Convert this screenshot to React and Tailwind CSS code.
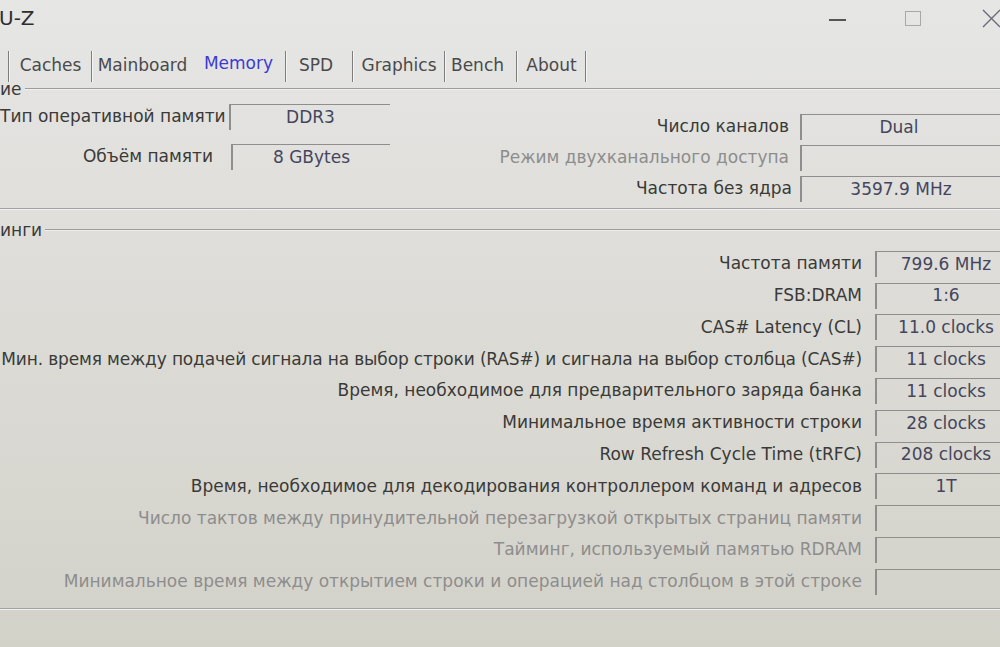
import React from 'react';

const tabs = [
  { label: 'Caches', w: 'w-[81px]', sepAfter: true },
  { label: 'Mainboard', w: 'w-[99px]', sepAfter: false },
  { label: 'Memory', w: 'w-[93px]', sepAfter: true, active: true },
  { label: 'SPD', w: 'w-[65px] pr-[7px]', sepAfter: true },
  { label: 'Graphics', w: 'w-[90px]', sepAfter: true },
  { label: 'Bench', w: 'w-[70px] pr-[7px]', sepAfter: true },
  { label: 'About', w: 'w-[67px]', sepAfter: true },
];

const timings = [
  { label: 'Частота памяти', value: '799.6 MHz' },
  { label: 'FSB:DRAM', value: '1:6' },
  { label: 'CAS# Latency (CL)', value: '11.0 clocks' },
  { label: 'Мин. время между подачей сигнала на выбор строки (RAS#) и сигнала на выбор столбца (CAS#)', value: '11 clocks', tight: true },
  { label: 'Время, необходимое для предварительного заряда банка', value: '11 clocks' },
  { label: 'Минимальное время активности строки', value: '28 clocks' },
  { label: 'Row Refresh Cycle Time (tRFC)', value: '208 clocks' },
  { label: 'Время, необходимое для декодирования контроллером команд и адресов', value: '1T' },
  { label: 'Число тактов между принудительной перезагрузкой открытых страниц памяти', value: '', disabled: true },
  { label: 'Тайминг, используемый памятью RDRAM', value: '', disabled: true },
  { label: 'Минимальное время между открытием строки и операцией над столбцом в этой строке', value: '', disabled: true },
];

const Sep = () => <div className="w-[2px] h-[31px] bg-[#7d7d7d] border-r border-[#f4f4f4] shrink-0" />;

const Field = ({ value, className }) => (
  <div className={`h-[26px] border-t border-l-2 border-[#8e8e8e] flex items-center justify-center text-[#45465e] shrink-0 ${className}`}>
    {value}
  </div>
);

const GroupHeader = ({ title }) => (
  <div className="flex items-center h-[18px]">
    <span className="text-[#3a3a3a] leading-none pr-[3px]">{title}</span>
    <div className="flex-1 border-t border-[#9c9c9c] border-b border-b-[#f0f0ee]" />
  </div>
);

export default function App() {
  return (
    <div
      className="w-[1000px] h-[647px] overflow-hidden bg-gradient-to-b from-[#e6e6e5] via-[#dcdbd6] to-[#d3d2c9] text-[17px] text-[#3a3a38]"
      style={{ fontFamily: '"DejaVu Sans", Verdana, sans-serif' }}
    >
      {/* Title bar */}
      <div className="h-[40px] flex items-center justify-between">
        <span className="text-[20px] text-[#2e2e2e] -ml-[1px] -mt-[4px]">U-Z</span>
        <div className="flex items-center h-full">
          <div className="w-[17px] h-[2px] bg-[#555] mr-[59px]" />
          <div className="w-[16px] h-[15px] border border-[#a8a8a8] mr-[61px] -mt-[3px]" />
          <svg width="19" height="19" viewBox="0 0 19 19" className="-mr-[1px] -mt-[3px]">
            <path d="M1 1 L18 18 M18 1 L1 18" stroke="#6a6a7a" strokeWidth="1.4" />
          </svg>
        </div>
      </div>

      {/* Tabs */}
      <div className="h-[48px] flex items-center pt-[4px]">
        <div className="w-[8px] shrink-0" />
        <Sep />
        {tabs.map((t) => (
          <React.Fragment key={t.label}>
            <div className={`${t.w} shrink-0 text-center ${t.active ? 'text-[#3b3bd4] -mt-[4px]' : 'text-[#4a4a4a]'}`}>
              {t.label}
            </div>
            {t.sepAfter && <Sep />}
          </React.Fragment>
        ))}
      </div>

      {/* General group */}
      <div className="-mt-[8px]">
        <GroupHeader title="ие" />
        <div className="flex h-[110px]">
          <div className="w-[390px] pt-[6px] flex flex-col gap-[14px] shrink-0">
            <div className="flex items-center">
              <div className="w-[216px] text-right whitespace-nowrap">Тип оперативной памяти</div>
              <Field value="DDR3" className="ml-[13px] w-[161px]" />
            </div>
            <div className="flex items-center">
              <div className="w-[216px] text-right whitespace-nowrap pr-[3px]">Объём памяти</div>
              <Field value="8 GBytes" className="ml-[15px] w-[159px]" />
            </div>
          </div>
          <div className="flex-1 pt-[16px] flex flex-col gap-[5px]">
            <div className="flex items-center">
              <div className="flex-1 text-right pr-[11px] whitespace-nowrap">Число каналов</div>
              <Field value="Dual" className="w-[200px] pr-[4px]" />
            </div>
            <div className="flex items-center">
              <div className="flex-1 text-right pr-[11px] whitespace-nowrap text-[#8d8d8d]">Режим двухканального доступа</div>
              <Field value="" className="w-[200px]" />
            </div>
            <div className="flex items-center">
              <div className="flex-1 text-right pr-[8px] whitespace-nowrap">Частота без ядра</div>
              <Field value="3597.9 MHz" className="w-[200px]" />
            </div>
          </div>
        </div>
        <div className="border-t border-[#a2a2a2] border-b border-b-[#f0f0ee]" />
      </div>

      {/* Timings group */}
      <div className="mt-[11px]">
        <GroupHeader title="инги" />
        <div className="pt-[9px] flex flex-col">
          {timings.map((r) => (
            <div key={r.label} className="h-[31.8px] flex items-center">
              <div className="flex-1 overflow-hidden flex justify-end pr-[13px]">
                <span
                  className={`whitespace-nowrap shrink-0 ${r.disabled ? 'text-[#8d8d8d]' : ''} ${r.tight ? 'tracking-[-0.15px]' : ''}`}
                >
                  {r.label}
                </span>
              </div>
              <Field value={r.value} className="w-[125px] pl-[15px]" />
            </div>
          ))}
        </div>
        <div className="mt-[10px] border-t border-[#a2a2a2] border-b border-b-[#f0f0ee]" />
      </div>
    </div>
  );
}
